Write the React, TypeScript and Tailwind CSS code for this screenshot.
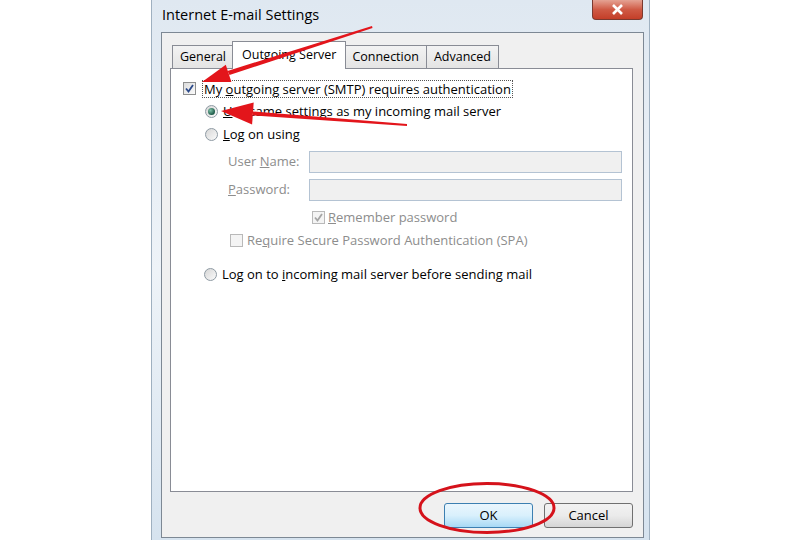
import React from "react";

const font = { fontFamily: '"Open Sans", "Noto Sans", Arial, sans-serif' };

function Check({ checked, disabled }: { checked?: boolean; disabled?: boolean }) {
	return (
		<span
			className={`inline-flex h-[13px] w-[13px] shrink-0 items-center justify-center border ${
				disabled ? "border-[#b9b9b9] bg-[#f4f4f4]" : "border-[#8e8f8f] bg-linear-to-br from-[#dcdcdc] to-[#fbfbfb]"
			}`}
		>
			{checked && (
				<svg width="9" height="9" viewBox="0 0 9 9">
					<path
						d="M1 4.5 L3.5 7.5 L8 1"
						fill="none"
						stroke={disabled ? "#a5a5a5" : "#2c4a8a"}
						strokeWidth="1.8"
					/>
				</svg>
			)}
		</span>
	);
}

function Radio({ checked }: { checked?: boolean }) {
	return (
		<span className="inline-flex h-[13px] w-[13px] shrink-0 items-center justify-center rounded-full border border-[#8e9aa3] bg-linear-to-br from-[#d6d6d6] to-[#fbfbfb]">
			{checked && (
				<span className="h-[7px] w-[7px] rounded-full bg-[radial-gradient(circle_at_35%_35%,#7fc1a8,#1d5a48_70%)]" />
			)}
		</span>
	);
}

function Tab({ label, active }: { label: string; active?: boolean }) {
	if (active) {
		return (
			<div className="relative z-10 -mx-[2px] mb-[-1px] flex h-[28px] items-center border border-b-0 border-[#898c95] bg-white px-[9px] text-[12.5px] text-black">
				{label}
			</div>
		);
	}
	return (
		<div className="flex h-[23px] items-center border border-b-0 border-[#898c95] bg-linear-to-b from-[#f3f3f3] to-[#e4e4e4] px-[7px] text-[12.5px] text-black [&+&]:border-l-0">
			{label}
		</div>
	);
}

export default function App() {
	return (
		<div className="relative h-[540px] w-[800px] overflow-hidden bg-white" style={font}>
			<div className="ml-[151px] flex h-[540px] w-[499px] flex-col border-x border-[#9fb0c0] bg-linear-to-b from-[#dfe8f1] via-[#eef3f8] to-[#d6e3ef]">
				{/* title bar */}
				<div className="flex h-[32px] items-start justify-between">
					<div className="pl-[10px] pt-[4px] text-[14.5px] text-black">Internet E-mail Settings</div>
					<div className="mr-[6px] flex h-[20px] w-[51px] items-center justify-center rounded-b-[4px] border border-t-0 border-[#7a3a30] bg-linear-to-b from-[#e4a293] via-[#cf5a45] to-[#c43e28]">
						<svg width="13" height="11" viewBox="0 0 13 11">
							<path d="M2 1 L11 10 M11 1 L2 10" stroke="#ffffff" strokeWidth="2.6" />
						</svg>
					</div>
				</div>

				{/* client area */}
				<div className="ml-[9px] flex h-[506px] w-[483px] flex-col border border-[#7d8894] bg-[#f0f0f0] pl-[8px] pr-[10px] pt-[8px]">
					<div className="flex h-[27px] items-end pl-[2px]">
						<Tab label="General" />
						<Tab label="Outgoing Server" active />
						<div className="flex">
							<Tab label="Connection" />
							<Tab label="Advanced" />
						</div>
					</div>

					<div className="flex h-[424px] flex-col border border-[#898c95] bg-white pl-[12px] pt-[8px] text-[13px] text-black">
						<div className="flex h-[23px] items-center gap-[6px]">
							<Check checked />
							<span className="border border-dotted border-[#555] px-[1px] leading-[16px]">
								My <u>o</u>utgoing server (SMTP) requires authentication
							</span>
						</div>
						<div className="flex h-[23px] items-center gap-[5px] pl-[22px]">
							<Radio checked />
							<span>
								<u>U</u>se same settings as my incoming mail server
							</span>
						</div>
						<div className="flex h-[23px] items-center gap-[5px] pl-[22px]">
							<Radio />
							<span>
								<u>L</u>og on using
							</span>
						</div>
						<div className="mt-[5px] flex h-[22px] items-center pl-[45px] text-[#8d8d8d]">
							<span className="w-[81px]">
								User <u>N</u>ame:
							</span>
							<div className="h-[22px] w-[313px] border border-[#b4c3d3] bg-[#f0f0f0]" />
						</div>
						<div className="mt-[6px] flex h-[22px] items-center pl-[45px] text-[#8d8d8d]">
							<span className="w-[81px]">
								<u>P</u>assword:
							</span>
							<div className="h-[22px] w-[313px] border border-[#b4c3d3] bg-[#f0f0f0]" />
						</div>
						<div className="mt-[5px] flex h-[23px] items-center gap-[3px] pl-[129px] text-[#8d8d8d]">
							<Check checked disabled />
							<span>
								<u>R</u>emember password
							</span>
						</div>
						<div className="flex h-[23px] items-center gap-[4px] pl-[47px] text-[#8d8d8d]">
							<Check disabled />
							<span>
								Re<u>q</u>uire Secure Password Authentication (SPA)
							</span>
						</div>
						<div className="mt-[11px] flex h-[23px] items-center gap-[5px] pl-[21px]">
							<Radio />
							<span>
								Log on to <u>i</u>ncoming mail server before sending mail
							</span>
						</div>
					</div>

					<div className="mt-[11px] flex justify-end gap-[11px] text-[13px] text-black">
						<button className="h-[25px] w-[89px] rounded-[3px] border border-[#3c7fb1] bg-linear-to-b from-[#eaf6fd] via-[#d9f0fc] to-[#a7d9f5]">
							OK
						</button>
						<button className="h-[25px] w-[89px] rounded-[3px] border border-[#707070] bg-linear-to-b from-[#f2f2f2] via-[#ebebeb] to-[#d5d5d5]">
							Cancel
						</button>
					</div>
				</div>
			</div>

			{/* red annotations */}
			<svg className="pointer-events-none absolute inset-0 z-20" width="800" height="540" viewBox="0 0 800 540">
				<polygon points="372,26 372.5,28 229.5,75 227.5,71" fill="#e3151b" />
				<polygon points="202,82 231.4,82 225.8,64.8" fill="#e3151b" />
				<polygon points="407,124 407,126 253,115.5 253,111.5" fill="#e3151b" />
				<polygon points="221,111 253.7,102.4 252.1,124.4" fill="#e3151b" />
				<ellipse cx="487" cy="508" rx="67" ry="24.5" fill="none" stroke="#d5121b" strokeWidth="3" />
			</svg>
		</div>
	);
}
